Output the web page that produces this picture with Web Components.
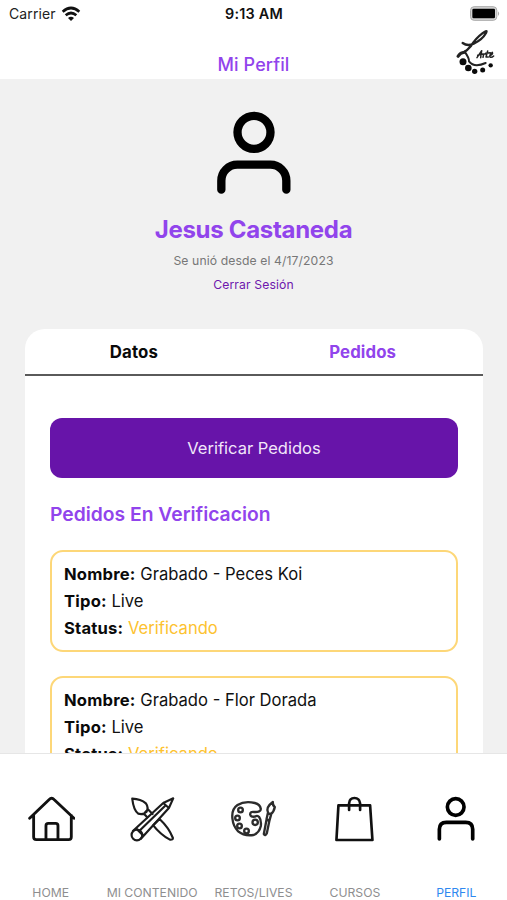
<!DOCTYPE html>
<html lang="es">
<head>
<meta charset="utf-8">
<title>Mi Perfil</title>
<style>
html,body{margin:0;height:100%;background:#fff}
body{font-family:Inter,"Liberation Sans",sans-serif;color:#111;overflow:hidden}
</style>
</head>
<body>
<app-screen></app-screen>
<script>
const define = (name, html) => customElements.define(name, class extends HTMLElement {
  constructor() {
    super();
    const t = document.createElement('template');
    t.innerHTML = html;
    this.attachShadow({mode: 'open'}).append(t.content.cloneNode(true));
  }
});

define('status-bar', `
<style>
:host{display:grid;grid-template-columns:1fr auto 1fr;height:27px;align-items:center;padding:0 8px 0 9px;box-sizing:border-box;font-size:14px;line-height:27px;color:#222}
.left{display:flex;align-items:center;gap:5px;letter-spacing:.12px}
.time{font-weight:600;color:#111;font-size:14.400px;letter-spacing:.2px}
.battery{justify-self:end;display:block;margin-right:-2px}
svg{display:block}
</style>
<div class="left"><span>Carrier</span>
<svg width="20" height="16" viewBox="183 14 60 48"><g fill="none" stroke="#111" stroke-width="8"><path d="M188 31Q213 9 238 31"/><path d="M197 42Q213 28 229 42"/></g><path d="M204 50Q213 43 222 50L213 59Z" fill="#111"/></svg></div>
<span class="time">9:13 AM</span>
<svg class="battery" width="31" height="17" viewBox="91 13 93 51"><rect x="92.500" y="18" width="79" height="41" rx="11" fill="#d4d4d4" stroke="#aaa" stroke-width="3"/><rect x="98" y="24" width="68" height="29" rx="4" fill="#000"/><path d="M175 32q7 7 0 14z" fill="#aaa"/></svg>`);

define('brand-logo', `
<style>:host{display:block}svg{display:block}</style>
<svg width="45" height="48" viewBox="45 87 135 144"><g fill="none" stroke="#222" stroke-linecap="round" stroke-linejoin="round">
<path d="M68 129Q83 140 101 131Q127 119 138 99Q144 87 127 100Q107 115 92 139Q82 151 72 157" stroke-width="7"/>
<path d="M74 155Q88 175 87 184Q102 204 137 189" stroke-width="6"/>
<path d="M54 169Q61 158 73 157" stroke-width="9"/>
<path d="M111 173L125 152L122 173M113 166L128 162M129 172L131 162L137 162M143 153L138 171L145 171M137 160L151 158M150 167Q160 162 157 157Q147 166 150 171Q155 174 161 168" stroke-width="4.500"/></g>
<g fill="#0a0a0a"><circle cx="69" cy="185" r="10.500"/><circle cx="85" cy="204" r="10"/><circle cx="104" cy="214" r="8"/><circle cx="128" cy="210" r="7.500"/><circle cx="152" cy="196" r="6.500"/></g></svg>`);

define('page-header', `
<style>
:host{display:grid;grid-template-columns:1fr auto 1fr;height:52px;padding:0 7px 0 7px;box-sizing:border-box}
h1{grid-column:2;margin:0;align-self:end;font-weight:500;font-size:18px;line-height:22px;padding-bottom:3px;color:#9144ec;letter-spacing:.1px}
brand-logo{justify-self:end;margin-top:2px}
</style>
<h1><slot></slot></h1><brand-logo></brand-logo>`);

define('profile-summary', `
<style>
:host{display:flex;flex-direction:column;align-items:center;height:250px}
svg{display:block;margin-top:31px}
h2{margin:15px 0 0;font-size:24px;line-height:34px;font-weight:650;letter-spacing:-.3px;color:#9144ec}
p{margin:5px 0 0;font-size:12.200px;line-height:18px;color:#777;letter-spacing:.1px}
a{margin-top:6px;font-size:12.200px;line-height:18px;color:#6d17ad;letter-spacing:.12px}
</style>
<svg width="78" height="88" viewBox="224 60 234 264"><g fill="none" stroke="#000" stroke-width="25" stroke-linecap="round"><circle cx="341" cy="127" r="49.500"/><path d="M243 299V272a48 48 0 0 1 48-48H390a48 48 0 0 1 48 48V299"/></g></svg>
<h2><slot name="name"></slot></h2><p><slot name="since"></slot></p><a><slot name="action"></slot></a>`);

define('card-tabs', `
<style>
:host{display:grid;grid-template-columns:1fr 1fr;height:47px;box-sizing:border-box;border-bottom:2px solid #5a5a5a;text-align:center;font-size:16.800px;line-height:46px;font-weight:650;letter-spacing:.1px;color:#0a0a0a}
::slotted(*){padding-right:11px}
::slotted(.active){color:#9144ec}
</style><slot></slot>`);

define('primary-button', `
<style>
:host{display:block}
button{display:block;width:100%;height:60px;border:0;border-radius:12px;background:#6714a9;color:#f2e6fa;font:400 16.500px/60px Inter,"Liberation Sans",sans-serif;padding:0}
</style><button><slot></slot></button>`);

define('order-card', `
<style>
:host{display:block;box-sizing:border-box;height:102px;border:2px solid #fdd778;border-radius:13px;padding:8.500px 12px;font-size:16.600px;line-height:27px}
div{white-space:nowrap}
b{font-weight:680;color:#0a0a0a;letter-spacing:.2px}
.status{color:#fdc22f}
</style>
<div><b>Nombre:</b> <slot name="title"></slot></div>
<div><b>Tipo:</b> <slot name="kind"></slot></div>
<div><b>Status:</b> <span class="status"><slot name="status"></slot></span></div>`);

define('orders-panel', `
<style>
:host{display:block;margin:0 24.500px 0 25px;background:#fff;border-radius:20px 20px 0 0;overflow:hidden;height:600px}
.body{display:flex;flex-direction:column;padding:42px 24.500px 0 25px}
h3{margin:23px 0 22px;font-size:19.300px;line-height:27px;font-weight:640;color:#9144ec}
.list{display:flex;flex-direction:column;gap:24px}
</style>
<card-tabs><span>Datos</span><span class="active">Pedidos</span></card-tabs>
<div class="body"><primary-button>Verificar Pedidos</primary-button><h3>Pedidos En Verificacion</h3>
<div class="list"><slot></slot></div></div>`);

define('tab-item', `
<style>
:host{display:flex;flex-direction:column;align-items:center;min-width:0;font-size:12.200px;line-height:16px;color:#8e8e8f;white-space:nowrap}
::slotted(svg){display:block;margin-bottom:42px}
:host([active]){color:#2f88f0}
</style><slot name="icon"></slot><span><slot></slot></span>`);

define('tab-bar', `
<style>
:host{display:grid;grid-template-columns:repeat(5,1fr);height:147px;box-sizing:border-box;border-top:1px solid #e6e6e6;background:#fff;padding-top:41px}
svg{fill:none;stroke:#111;stroke-width:8;stroke-linecap:round;stroke-linejoin:round}
</style>
<tab-item><svg slot="icon" width="48" height="48" viewBox="50.1 45 144 144"><path d="M58 115L116 59Q124 51 132 59L191 115M70 106V171Q70 179 78 179H175Q183 179 183 171V106M107 178V137Q107 130 114 130H136Q143 130 143 137V178" stroke-width="8.500"/></svg>HOME</tab-item>
<tab-item><svg slot="icon" width="48" height="48" viewBox="84.3 45 144 144"><g stroke="#1c1c1c" stroke-width="6.500"><path d="M97 56Q123 57 138 70Q147 83 140 95Q131 105 115 101Q101 91 97 56ZM132 101L144 88L158 102M132 101L142 112M160 136L179 117Q207 143 219 174Q220 180 210 179Q182 164 160 136Z"/><path d="M99 153L190 69L220 55L207 84L123 176M108 145L129 166M121 150L196 77M190 69L207 84"/><circle cx="111" cy="165" r="16"/></g></svg>MI CONTENIDO</tab-item>
<tab-item><svg slot="icon" width="48" height="48" viewBox="73.5 45 144 144"><g stroke="#2c2c2c" stroke-width="7"><path d="M169 87Q167 73 151 69Q120 62 99 75Q80 88 84 117Q86 139 101 154Q119 169 147 165Q164 159 169 138Q171 120 164 111Q159 105 151 110Q138 112 137 103Q137 94 149 96Q169 97 169 87Z"/><circle cx="108" cy="90" r="7"/><circle cx="99" cy="114" r="7"/><circle cx="105" cy="138" r="7"/><circle cx="126" cy="153" r="7"/><circle cx="152" cy="127" r="8"/><path d="M191 100Q182 82 205 66Q204 77 211 81Q208 96 199 102ZM190 100L200 103L195 121L186 118ZM186 119L195 121L187 160Q183 169 178 162Z"/></g></svg>RETOS/LIVES</tab-item>
<tab-item><svg slot="icon" width="48" height="48" viewBox="62.7 45 144 144"><path d="M85 76H180L187 180H79ZM117 90V70Q118 54 133 54Q148 54 150 70V90"/></svg>CURSOS</tab-item>
<tab-item active><svg slot="icon" width="48" height="48" viewBox="66.9 45 144 144"><g stroke="#000" stroke-width="11"><circle cx="138" cy="81" r="25"/><path d="M89 177V148Q89 127 110 127H168Q189 127 189 148V177"/></g></svg>PERFIL</tab-item>`);

define('app-screen', `
<style>
:host{display:flex;flex-direction:column;width:507px;height:900px;background:#fff;overflow:hidden}
main{flex:1;min-height:0;overflow:hidden;background:#f1f1f1}
status-bar,page-header,tab-bar{flex:none}
</style>
<status-bar></status-bar><page-header>Mi Perfil</page-header>
<main><profile-summary><span slot="name">Jesus Castaneda</span><span slot="since">Se unió desde el 4/17/2023</span><span slot="action">Cerrar Sesión</span></profile-summary>
<orders-panel>
<order-card><span slot="title">Grabado - Peces Koi</span><span slot="kind">Live</span><span slot="status">Verificando</span></order-card>
<order-card><span slot="title">Grabado - Flor Dorada</span><span slot="kind">Live</span><span slot="status">Verificando</span></order-card>
</orders-panel></main>
<tab-bar></tab-bar>`);
</script>
</body>
</html>
